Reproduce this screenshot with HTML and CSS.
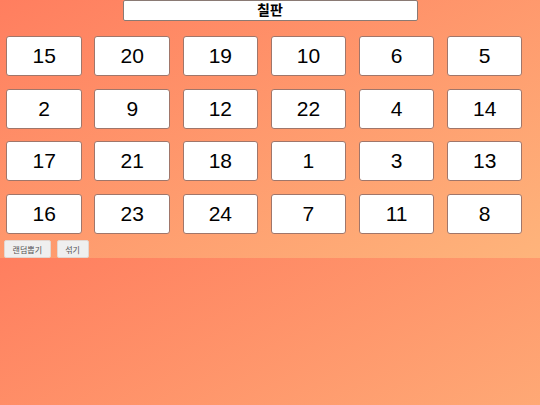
FILE: index.html
```html
<!DOCTYPE html>
<html lang="ko">
<head>
<meta charset="utf-8">
<link rel="stylesheet" href="styles.css">
</head>
<body>
<div class="title">칠판</div>
<div class="board">
<div class="cell">15</div><div class="cell">20</div><div class="cell">19</div><div class="cell">10</div><div class="cell">6</div><div class="cell">5</div>
<div class="cell">2</div><div class="cell">9</div><div class="cell">12</div><div class="cell">22</div><div class="cell">4</div><div class="cell">14</div>
<div class="cell">17</div><div class="cell">21</div><div class="cell">18</div><div class="cell">1</div><div class="cell">3</div><div class="cell">13</div>
<div class="cell">16</div><div class="cell">23</div><div class="cell">24</div><div class="cell">7</div><div class="cell">11</div><div class="cell">8</div>
</div>
<div class="actions">
<button class="btn">랜덤뽑기</button><button class="btn">섞기</button>
</div>
</body>
</html>
```
FILE: styles.css
```css
body {
  margin: 0;
  background: linear-gradient(to bottom right, #ff7e5f, #feb47b);
  font-family: "Liberation Sans", "Noto Sans CJK KR", sans-serif;
}
.title {
  box-sizing: border-box;
  width: 295px;
  height: 21px;
  margin: 0 auto;
  background: #fff;
  border: 1px solid #8a7a74;
  border-radius: 2px;
  text-align: center;
  font-weight: bold;
  font-size: 14px;
  line-height: 19px;
  color: #000;
}
.board {
  display: grid;
  grid-template-columns: repeat(6, 1fr);
  grid-auto-rows: 40px;
  column-gap: 12.6px;
  row-gap: 12.7px;
  width: 516px;
  padding: 15px 6px 0 6.4px;
}
.cell {
  box-sizing: border-box;
  background: #fff;
  border: 1px solid #a0766a;
  border-radius: 3px;
  display: flex;
  align-items: center;
  justify-content: center;
  font-size: 21px;
  color: #000;
}
.actions {
  display: flex;
  gap: 6px;
  padding: 6px 4px 0;
}
.btn {
  box-sizing: border-box;
  height: 18px;
  padding: 0 7.6px;
  margin: 0;
  background: #efefef;
  border: 1px solid #e3d6d0;
  border-radius: 2px;
  font-family: "Noto Sans CJK KR", sans-serif;
  font-size: 8px;
  color: #555;
}
```
